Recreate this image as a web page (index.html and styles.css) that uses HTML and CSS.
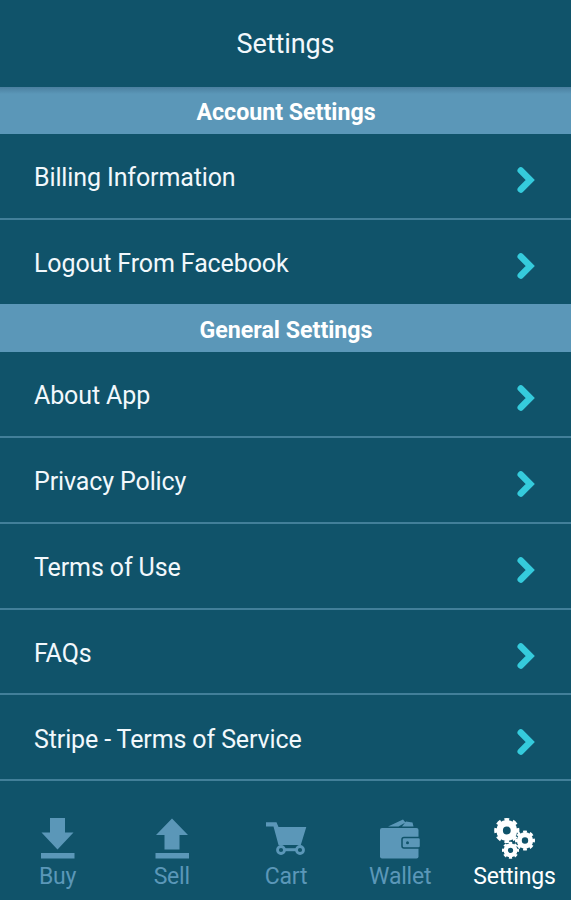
FILE: index.html
```html
<!DOCTYPE html>
<html lang="en">
<head>
<meta charset="utf-8">
<title>Settings</title>
<link rel="stylesheet" href="styles.css">
</head>
<body>
<svg class="defs" aria-hidden="true"><symbol id="chevron" viewBox="0 0 20 28"><path d="M3.800 4.500 13.200 14l-9.400 9.500"/></symbol></svg>
<div class="app">
  <header class="header"><h1>Settings</h1></header>
  <main>
    <h2 class="band band-top">Account Settings</h2>
    <ul class="list">
      <li><span>Billing Information</span><svg class="chev"><use href="#chevron"/></svg></li>
      <li><span>Logout From Facebook</span><svg class="chev"><use href="#chevron"/></svg></li>
    </ul>
    <h2 class="band">General Settings</h2>
    <ul class="list">
      <li><span>About App</span><svg class="chev"><use href="#chevron"/></svg></li>
      <li><span>Privacy Policy</span><svg class="chev"><use href="#chevron"/></svg></li>
      <li><span>Terms of Use</span><svg class="chev"><use href="#chevron"/></svg></li>
      <li><span>FAQs</span><svg class="chev"><use href="#chevron"/></svg></li>
      <li><span>Stripe - Terms of Service</span><svg class="chev"><use href="#chevron"/></svg></li>
    </ul>
  </main>
  <nav class="tabs">
    <a class="tab"><svg class="icon" viewBox="35 816 44 44"><path d="M50 818h15v14.500h8.500L57.500 849.500 41.500 832.500H50zM41 853h33.500v5.500H41z"/></svg><span>Buy</span></a>
    <a class="tab"><svg class="icon" viewBox="149 816 44 44"><path d="M172 818.500 188 835h-8.500v14.500h-15V835H156zM155.500 853H189v5.500h-33.500z"/></svg><span>Sell</span></a>
    <a class="tab"><svg class="icon" viewBox="263.500 816 44 44"><path d="M266.500 822.300h10.500l2 4.700H306.800l-5.500 18H279l-5-18.500h-7.500z"/><path class="axle" d="M281 849.700h19"/><circle class="wheel" cx="281.500" cy="850" r="3.500"/><circle class="wheel" cx="300.500" cy="850" r="3.500"/></svg><span>Cart</span></a>
    <a class="tab"><svg class="icon" viewBox="378 816 44 44"><path d="m388 826.500 15-7 2.500 3-7 4zM402 826.500l4-5 6.500 1 1 4z"/><rect x="380" y="828" width="38.500" height="30.500" rx="2"/><rect class="clasp" x="402" y="837.500" width="18.500" height="10.500" rx="2"/><circle class="snap" cx="407.500" cy="842.800" r="1.500"/></svg><span>Wallet</span></a>
    <a class="tab active"><svg class="icon" viewBox="492.500 816 44 44">
      <g class="gear"><circle cx="507.300" cy="830.500" r="7.200" stroke-width="6.600"/><circle cx="507.300" cy="830.500" r="11.200" stroke-width="2.800" pathLength="80" stroke-dasharray="5.500 4.500" stroke-dashoffset="2.750"/>
      <circle cx="525.500" cy="840.500" r="5.700" stroke-width="5"/><circle cx="525.500" cy="840.500" r="8.700" stroke-width="2.600" pathLength="80" stroke-dasharray="5.500 4.500" stroke-dashoffset="2.750"/>
      <circle cx="511" cy="850.300" r="4.800" stroke-width="4.300"/><circle cx="511" cy="850.300" r="7.400" stroke-width="2.200" pathLength="80" stroke-dasharray="5.500 4.500" stroke-dashoffset="2.750"/></g>
    </svg><span>Settings</span></a>
  </nav>
</div>
</body>
</html>
```
FILE: styles.css
```css
* { box-sizing: border-box; }
body {
  margin: 0;
  background: #10536a;
  color: #f2f8fc;
  font-family: Roboto, "Liberation Sans", sans-serif;
}
.defs { display: none; }
.app {
  display: flex;
  flex-direction: column;
  height: 900px;
  overflow: hidden;
}
.header {
  display: flex;
  align-items: center;
  justify-content: center;
  height: 87px;
  flex: none;
}
h1 {
  margin: 0;
  font-size: 27px;
  font-weight: 400;
  line-height: 30px;
  letter-spacing: -0.100px;
}
main { flex: 1; }
.band {
  display: flex;
  align-items: center;
  justify-content: center;
  height: 48px;
  margin: 0;
  padding: 3px 0 0 1px;
  background: #5b97b8;
  color: #fff;
  font-size: 23.200px;
  font-weight: 700;
}
.band-top {
  height: 47px;
  padding-top: 2px;
  background: linear-gradient(#4b7f9f, #5b97b8 7px);
}
.list { margin: 0; padding: 0; list-style: none; }
.list li {
  display: flex;
  align-items: center;
  justify-content: space-between;
  height: 85.850px;
  padding: 4px 34px 0 34px;
  border-bottom: 2px solid #427f99;
  font-size: 25px;
  letter-spacing: -0.120px;
}
.list:first-of-type li { height: 85.500px; }
.list:first-of-type li:last-child { height: 84.500px; border-bottom: 0; }
.chev {
  width: 20px;
  height: 28px;
  margin-top: 5px;
  fill: none;
  stroke: #35cbdc;
  stroke-width: 6.600px;
  stroke-linecap: round;
  stroke-linejoin: miter;
}
.tabs {
  display: grid;
  grid-template-columns: repeat(5, 1fr);
  flex: none;
  height: 84px;
}
.tab {
  display: flex;
  flex-direction: column;
  align-items: center;
  color: #5b97b8;
  font-size: 23px;
  line-height: 28px;
  letter-spacing: -0.200px;
}
.tab span { margin-top: 3px; padding-left: 1px; }
.active { color: #fff; }
.icon { width: 44px; height: 44px; fill: currentColor; }
.axle { stroke: currentColor; stroke-width: 3px; }
.wheel { fill: #10536a; stroke: currentColor; stroke-width: 2.800px; }
.clasp { stroke: #10536a; stroke-width: 1.500px; }
.snap { fill: #10536a; }
.gear { fill: none; stroke: currentColor; }
```
